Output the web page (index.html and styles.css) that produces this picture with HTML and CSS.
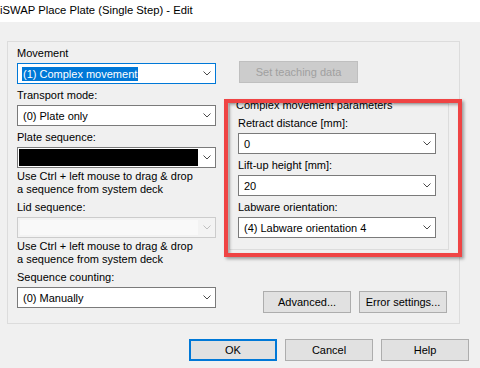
FILE: index.html
```html
<!DOCTYPE html>
<html lang="en">
<head>
    <meta charset="UTF-8">
    <meta name="viewport" content="width=device-width, initial-scale=1.0">
    <title>iSWAP Place Plate (Single Step) - Edit</title>
    <link rel="stylesheet" href="styles.css">
</head>
<body>
    <div class="title-bar">iSWAP Place Plate (Single Step) - Edit</div>

    <div class="dialog">
        <div class="group">
            <!-- left column: movement settings -->
            <div class="left-col">
                <div class="field">
                    <label>Movement</label>
                    <div class="combo focused">
                        <span class="value selected">(1) Complex movement</span>
                        <span class="arrow"><svg width="8" height="5" viewBox="0 0 8 5"><polyline points="0.5,0.5 4,4 7.5,0.5" /></svg></span>
                    </div>
                </div>
                <div class="field">
                    <label>Transport mode:</label>
                    <div class="combo">
                        <span class="value">(0) Plate only</span>
                        <span class="arrow"><svg width="8" height="5" viewBox="0 0 8 5"><polyline points="0.5,0.5 4,4 7.5,0.5" /></svg></span>
                    </div>
                </div>
                <div class="field">
                    <label>Plate sequence:</label>
                    <div class="combo black">
                        <span class="fill"></span>
                        <span class="arrow"><svg width="8" height="5" viewBox="0 0 8 5"><polyline points="0.5,0.5 4,4 7.5,0.5" /></svg></span>
                    </div>
                    <p class="hint">Use Ctrl + left mouse to drag &amp; drop<br>a sequence from system deck</p>
                </div>
                <div class="field">
                    <label>Lid sequence:</label>
                    <div class="combo disabled">
                        <span class="fill"></span>
                        <span class="arrow"><svg width="8" height="5" viewBox="0 0 8 5"><polyline points="0.5,0.5 4,4 7.5,0.5" /></svg></span>
                    </div>
                    <p class="hint hint-last">Use Ctrl + left mouse to drag &amp; drop<br>a sequence from system deck</p>
                </div>
                <div class="field">
                    <label>Sequence counting:</label>
                    <div class="combo">
                        <span class="value">(0) Manually</span>
                        <span class="arrow"><svg width="8" height="5" viewBox="0 0 8 5"><polyline points="0.5,0.5 4,4 7.5,0.5" /></svg></span>
                    </div>
                </div>
            </div>

            <!-- right column: teaching + complex params -->
            <div class="right-col">
                <button class="btn teach" disabled>Set teaching data</button>

                <div class="callout">
                    <div class="params">
                        <div class="params-title">Complex movement parameters</div>
                        <div class="field">
                            <label>Retract distance [mm]:</label>
                            <div class="combo">
                                <span class="value">0</span>
                                <span class="arrow"><svg width="8" height="5" viewBox="0 0 8 5"><polyline points="0.5,0.5 4,4 7.5,0.5" /></svg></span>
                            </div>
                        </div>
                        <div class="field">
                            <label>Lift-up height [mm]:</label>
                            <div class="combo">
                                <span class="value">20</span>
                                <span class="arrow"><svg width="8" height="5" viewBox="0 0 8 5"><polyline points="0.5,0.5 4,4 7.5,0.5" /></svg></span>
                            </div>
                        </div>
                        <div class="field">
                            <label>Labware orientation:</label>
                            <div class="combo">
                                <span class="value">(4) Labware orientation 4</span>
                                <span class="arrow"><svg width="8" height="5" viewBox="0 0 8 5"><polyline points="0.5,0.5 4,4 7.5,0.5" /></svg></span>
                            </div>
                        </div>
                    </div>
                </div>

                <div class="btn-row">
                    <button class="btn">Advanced...</button>
                    <button class="btn">Error settings...</button>
                </div>
            </div>
        </div>

        <div class="footer">
            <button class="btn default">OK</button>
            <button class="btn">Cancel</button>
            <button class="btn">Help</button>
        </div>
    </div>
</body>
</html>
```

FILE: styles.css
```css
* {
    box-sizing: border-box;
}

body {
    margin: 0;
    background-color: #f0f0f0;
    font-family: "Liberation Sans", Arial, sans-serif;
    font-size: 11px;
    color: #000;
}

.title-bar {
    height: 22px;
    line-height: 20px;
    background-color: #fff;
    font-size: 11.25px;
    white-space: nowrap;
}

.dialog {
    padding: 19px 11px 0 7px;
}

/* outer group box */
.group {
    display: flex;
    align-items: flex-start;
    gap: 13px;
    width: 453px;
    border: 1px solid #dcdcdc;
    padding: 5px 10px 10px 9px;
}

.left-col {
    width: 199px;
}

.field {
    margin-top: 5px;
}

.field:first-child,
.params-title + .field {
    margin-top: 0;
}

.field label {
    display: block;
    line-height: 13px;
    margin-bottom: 3px;
    white-space: nowrap;
}

/* combo boxes */
.combo {
    display: flex;
    align-items: center;
    height: 21px;
    border: 1px solid #7a7a7a;
    background-color: #fff;
    padding-left: 4px;
}

.combo .value {
    margin-right: auto;
    padding: 0 1px;
    line-height: 14px;
    white-space: nowrap;
}

.combo .arrow {
    display: flex;
    align-items: center;
    justify-content: center;
    width: 17px;
    height: 100%;
}

.combo .arrow polyline {
    fill: none;
    stroke: #4a4a4a;
    stroke-width: 1;
}

.combo.focused {
    border-color: #0078d7;
}

.combo .value.selected {
    background-color: #0078d7;
    color: #fff;
}

.combo.black {
    padding-left: 1px;
}

.combo.black .fill {
    flex: 1;
    height: 17px;
    background-color: #000;
}

.combo.disabled {
    border-color: #cccccc;
    background-color: #f3f3f3;
    padding-left: 2px;
}

.combo.disabled .fill {
    flex: 1;
    height: 15px;
    background-color: #f9f9f9;
}

.combo.disabled .arrow polyline {
    stroke: #bfbfbf;
}

.hint {
    margin: 2px 0 1px;
    line-height: 13px;
    white-space: nowrap;
}

.hint-last {
    margin-bottom: 2px;
}

/* buttons */
.btn {
    height: 22px;
    width: 88px;
    padding: 0;
    border: 1px solid #adadad;
    background-color: #e1e1e1;
    font-family: inherit;
    font-size: 11px;
    color: #000;
}

.btn.default {
    border: 2px solid #0078d7;
}

.btn.teach {
    width: 119px;
    margin: 14px 0 0 10px;
    background-color: #cccccc;
    border-color: #bfbfbf;
    color: #a0a0a0;
}

.right-col {
    display: flex;
    flex-direction: column;
    align-items: flex-start;
    width: 220px;
}

.callout {
    position: relative;
    margin-top: 20px;
}

/* red annotation frame drawn over the parameter group */
.callout::after {
    content: "";
    position: absolute;
    left: -5px;
    right: -13px;
    top: -4px;
    bottom: -7px;
    border: 4px solid #ef4444;
    box-shadow: 2px 2px 3px rgba(0, 0, 0, 0.35), inset 2px 2px 3px rgba(0, 0, 0, 0.3);
    pointer-events: none;
}

/* inner group box with caption sitting on the top line */
.params {
    width: 220px;
    padding: 0 12px 11px 8px;
    border: 1px solid #dcdcdc;
}

.params-title {
    width: max-content;
    margin: -5px 0 5px -3px;
    padding: 0 1px;
    line-height: 13px;
    background-color: #f0f0f0;
    white-space: nowrap;
}

.btn-row {
    display: flex;
    gap: 8px;
    align-self: flex-end;
    margin: 41px 2px 0 0;
}

.footer {
    display: flex;
    justify-content: flex-end;
    gap: 8px;
    margin-top: 15px;
}
```
